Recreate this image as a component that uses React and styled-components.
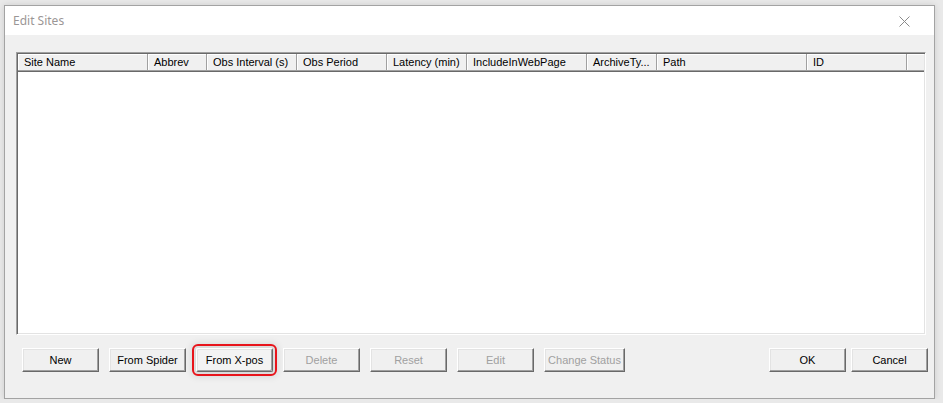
import React from 'react'
import styled, { createGlobalStyle, css } from 'styled-components'

const GlobalStyle = createGlobalStyle`
    html, body {
        margin: 0;
        padding: 0;
        background: #e9e9e9;
    }
    * {
        box-sizing: border-box;
    }
`

const columns = [
    { label: 'Site Name', width: 130 },
    { label: 'Abbrev', width: 59 },
    { label: 'Obs Interval (s)', width: 90 },
    { label: 'Obs Period', width: 90 },
    { label: 'Latency (min)', width: 80 },
    { label: 'IncludeInWebPage', width: 120 },
    { label: 'ArchiveTy...', width: 70 },
    { label: 'Path', width: 150 },
    { label: 'ID', width: 100 },
]

const leftButtons = [
    { label: 'New' },
    { label: 'From Spider' },
    { label: 'From X-pos', marked: true },
    { label: 'Delete', disabled: true },
    { label: 'Reset', disabled: true },
    { label: 'Edit', disabled: true },
    { label: 'Change Status', disabled: true, wide: true },
]

const App = () => {
  return (
    <>
        <GlobalStyle />
        <Dialog>
            <TitleBar>
                <Title>Edit Sites</Title>
                <CloseBtn>
                    <svg width="11" height="11" viewBox="0 0 11 11">
                        <path d="M0.5 0.5 L10.5 10.5 M10.5 0.5 L0.5 10.5" stroke="#8a8a8a" strokeWidth="1" fill="none" />
                    </svg>
                </CloseBtn>
            </TitleBar>
            <Client>
                <ListView>
                    <Header>
                        {columns.map(col => (
                            <HeaderCell key={col.label} $width={col.width}>{col.label}</HeaderCell>
                        ))}
                        <HeaderFiller />
                    </Header>
                </ListView>
                <ButtonRow>
                    <Group $gap={10}>
                        {leftButtons.map(b => (
                            <Button key={b.label} disabled={b.disabled} $marked={b.marked} $wide={b.wide}>
                                {b.label}
                            </Button>
                        ))}
                    </Group>
                    <Group $gap={5}>
                        <Button>OK</Button>
                        <Button>Cancel</Button>
                    </Group>
                </ButtonRow>
            </Client>
        </Dialog>
    </>
  )
}

const Dialog = styled.div`
    margin: 5px 0 0 4px;
    width: 931px;
    height: 394px;
    border: 1px solid #a3a3a3;
    background: #f0f0f0;
    display: flex;
    flex-direction: column;
    box-shadow: 0 0 6px rgba(0,0,0,0.12);
`
const TitleBar = styled.div`
    height: 29px;
    background: #ffffff;
    display: flex;
    align-items: center;
    justify-content: space-between;
    padding: 0 0 0 8px;
`
const Title = styled.span`
    font-family: "Segoe UI", "Noto Sans", sans-serif;
    font-size: 12px;
    color: #9b9696;
    margin-top: -1px;
`
const CloseBtn = styled.span`
    width: 30px;
    display: flex;
    align-items: center;
    margin-right: 5px;
    margin-top: 1px;
`
const Client = styled.div`
    flex: 1;
    padding: 17px 0 0 11px;
    display: flex;
    flex-direction: column;
`
const ListView = styled.div`
    width: 910px;
    height: 283px;
    background: #ffffff;
    border-top: 1px solid #a0a0a0;
    border-left: 1px solid #a0a0a0;
    border-right: 1px solid #ffffff;
    border-bottom: 1px solid #ffffff;
    box-shadow: inset 1px 1px 0 #696969, inset -1px -1px 0 #e3e3e3;
    padding: 1px;
`
const Header = styled.div`
    display: flex;
    height: 18px;
    background: #f0f0f0;
    border-bottom: 1px solid #696969;
    font-family: "Liberation Sans", Arial, sans-serif;
    font-size: 11px;
    color: #000000;
`
const HeaderCell = styled.div`
    width: ${p => p.$width}px;
    flex-shrink: 0;
    height: 100%;
    display: flex;
    align-items: center;
    padding-left: 6px;
    white-space: nowrap;
    overflow: hidden;
    border-right: 1px solid #a0a0a0;
    border-bottom: 1px solid #a0a0a0;
    box-shadow: inset 1px 1px 0 #ffffff;
`
const HeaderFiller = styled.div`
    flex: 1;
    height: 100%;
    border-bottom: 1px solid #a0a0a0;
    box-shadow: inset 1px 1px 0 #ffffff;
`
const ButtonRow = styled.div`
    display: flex;
    justify-content: space-between;
    margin-top: 13px;
    padding-left: 6px;
    width: 912px;
`
const Group = styled.div`
    display: flex;
    gap: ${p => p.$gap}px;
`
const Button = styled.button`
    width: ${p => (p.$wide ? 81 : 77)}px;
    height: 24px;
    padding: 0;
    margin: 0;
    background: #f0f0f0;
    font-family: "Liberation Sans", Arial, sans-serif;
    font-size: 11px;
    color: #000000;
    border-top: 1px solid #ffffff;
    border-left: 1px solid #ffffff;
    border-right: 1px solid #696969;
    border-bottom: 1px solid #696969;
    box-shadow: inset -1px -1px 0 #a0a0a0, inset 1px 1px 0 #e3e3e3;
    border-radius: 0;
    cursor: default;
    &:disabled {
        color: #a0a0a0;
    }
    ${p => p.$marked && css`
        outline: 2px solid #e8141b;
        outline-offset: 2px;
        border-radius: 2px;
        background: #f3f3f3;
        box-shadow: inset -1px -1px 0 #a0a0a0, inset 1px 1px 0 #e3e3e3, 0 0 7px 5px rgba(0,0,0,0.10);
    `}
`

export default App
